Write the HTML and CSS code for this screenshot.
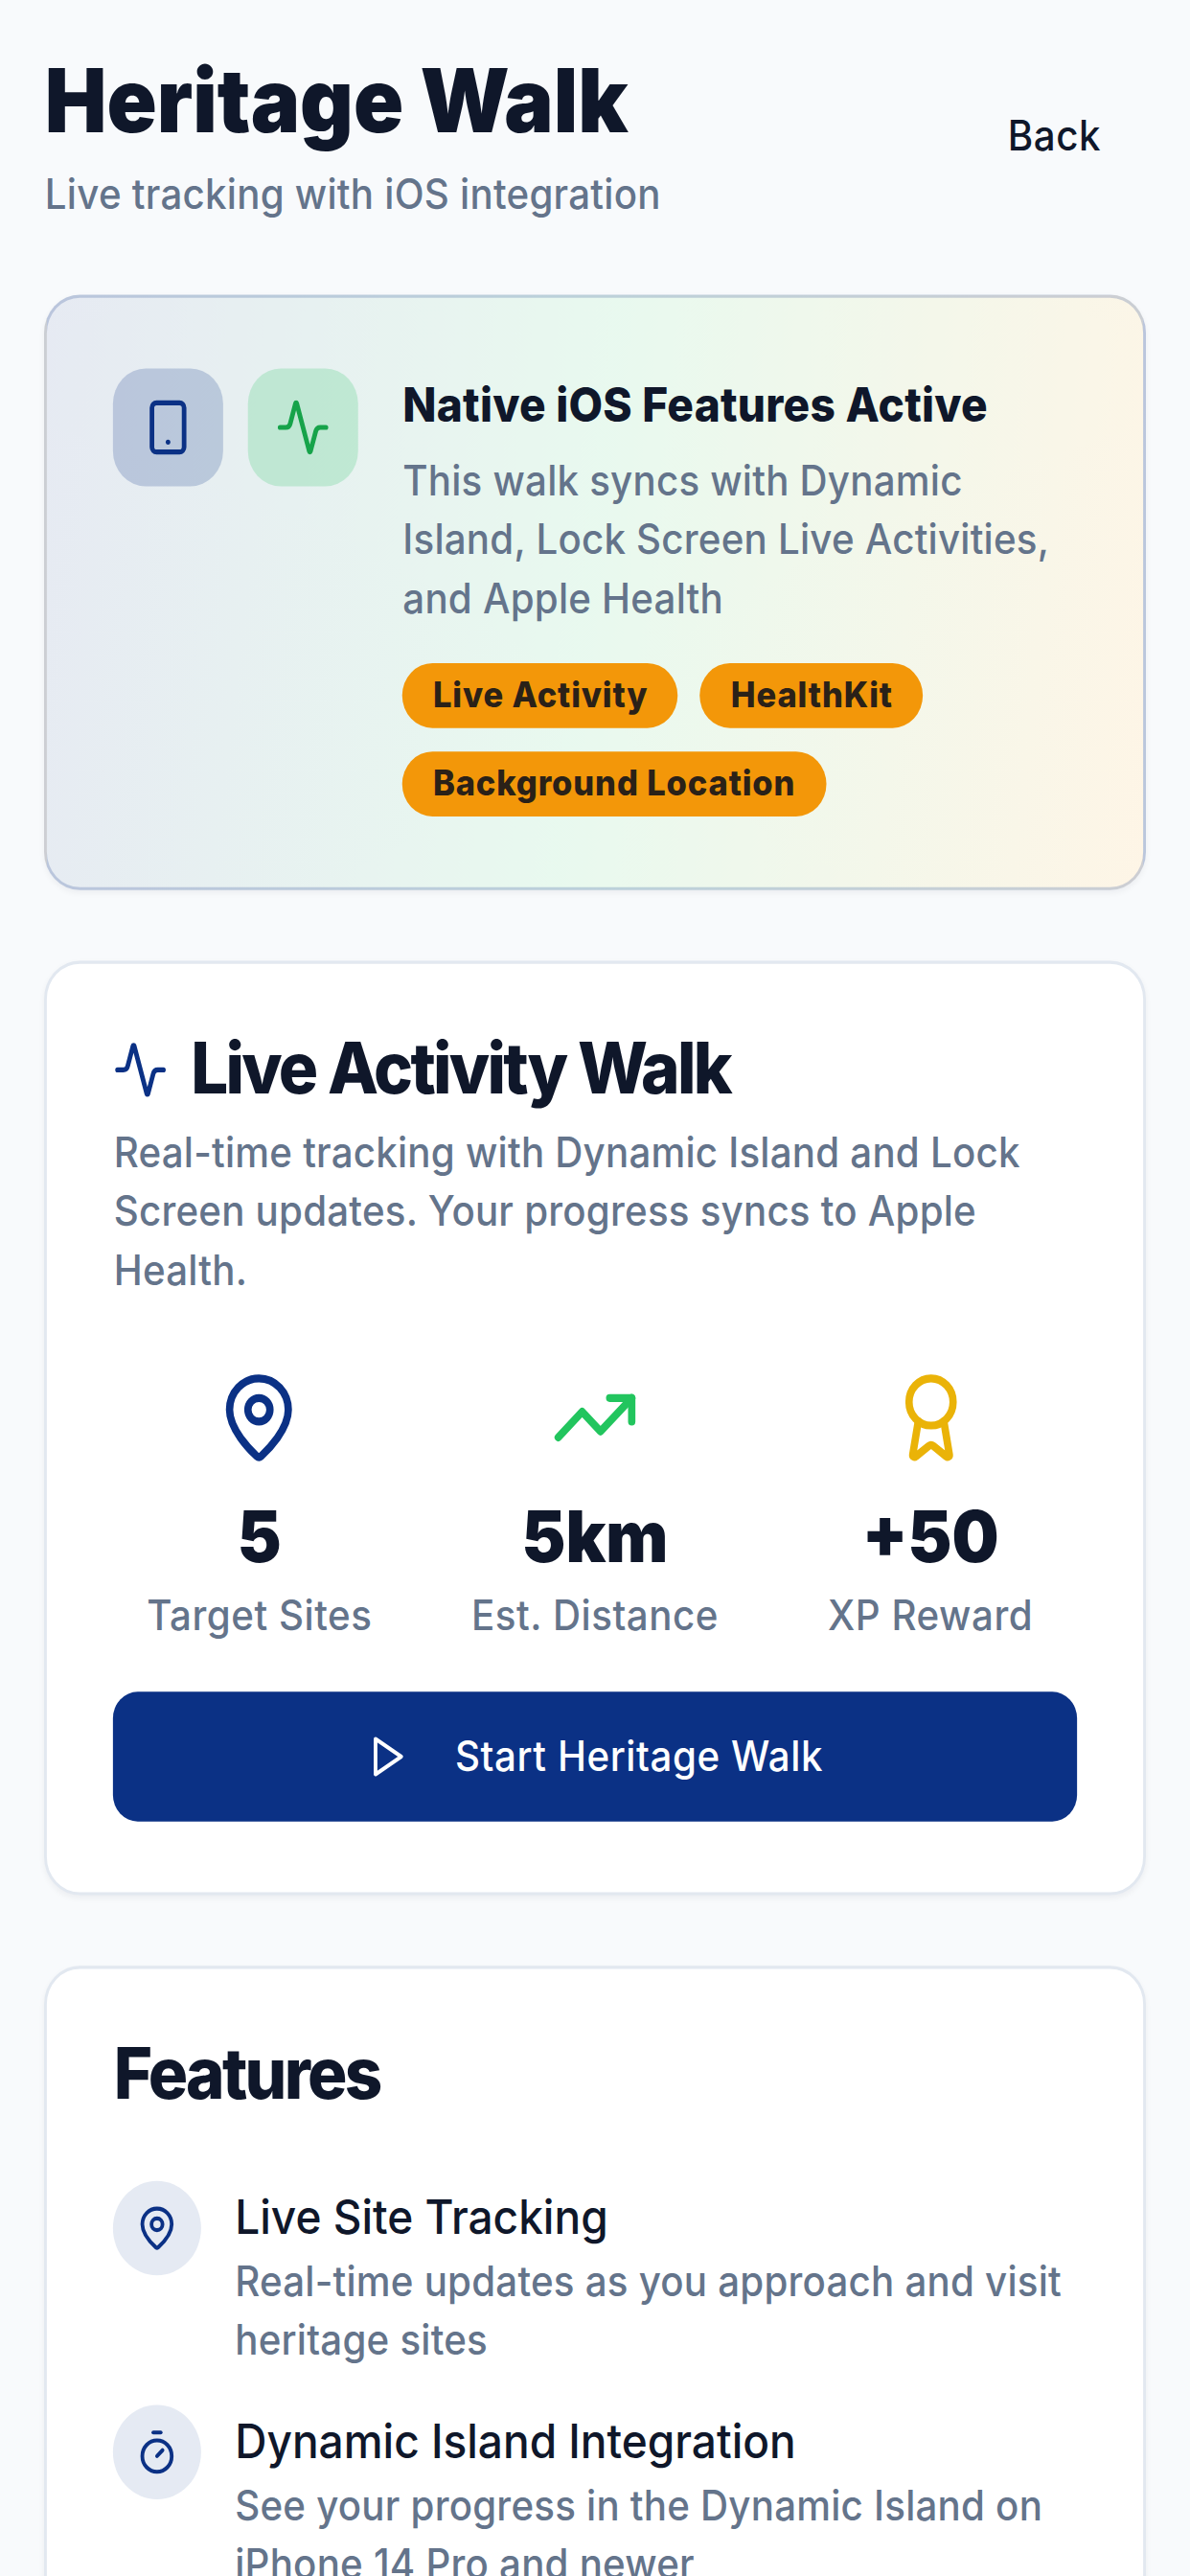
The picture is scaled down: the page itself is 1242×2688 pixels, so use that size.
FILE: index.html
```html
<!DOCTYPE html>
<html lang="en">
<head>
<meta charset="utf-8">
<title>Heritage Walk</title>
<link rel="stylesheet" href="styles.css">
</head>
<body>
<main class="page">
  <header class="header">
    <div>
      <h1 class="title">Heritage Walk</h1>
      <p class="subtitle">Live tracking with iOS integration</p>
    </div>
    <button class="back">Back</button>
  </header>

  <section class="card native">
    <div class="native-icons">
      <div class="native-icon native-icon-blue">
        <svg class="icon-20 stroke-blue" viewBox="0 0 24 24"><rect width="14" height="20" x="5" y="2" rx="2" ry="2"/><path d="M12 18h.01"/></svg>
      </div>
      <div class="native-icon native-icon-green">
        <svg class="icon-20 stroke-green-dark" viewBox="0 0 24 24"><path d="M22 12h-2.48a2 2 0 0 0-1.93 1.46l-2.35 8.36a.25.25 0 0 1-.48 0L9.24 2.18a.25.25 0 0 0-.48 0l-2.35 8.36A2 2 0 0 1 4.49 12H2"/></svg>
      </div>
    </div>
    <div class="native-body">
      <h3 class="native-title">Native iOS Features Active</h3>
      <p class="muted native-desc">This walk syncs with Dynamic Island, Lock Screen Live Activities, and Apple Health</p>
      <div class="tags">
        <span class="tag">Live Activity</span>
        <span class="tag">HealthKit</span>
        <span class="tag">Background Location</span>
      </div>
    </div>
  </section>

  <section class="card walk">
    <h2 class="card-title">
      <svg class="icon-20 stroke-blue" viewBox="0 0 24 24"><path d="M22 12h-2.48a2 2 0 0 0-1.93 1.46l-2.35 8.36a.25.25 0 0 1-.48 0L9.24 2.18a.25.25 0 0 0-.48 0l-2.35 8.36A2 2 0 0 1 4.49 12H2"/></svg>
      Live Activity Walk
    </h2>
    <p class="muted walk-desc">Real-time tracking with Dynamic Island and Lock Screen updates. Your progress syncs to Apple Health.</p>
    <div class="stats">
      <div class="stat">
        <svg class="icon-32 stroke-blue" viewBox="0 0 24 24"><path d="M20 10c0 4.993-5.539 10.193-7.399 11.799a1 1 0 0 1-1.202 0C9.539 20.193 4 14.993 4 10a8 8 0 0 1 16 0"/><circle cx="12" cy="10" r="3"/></svg>
        <div class="stat-value">5</div>
        <div class="stat-label">Target Sites</div>
      </div>
      <div class="stat">
        <svg class="icon-32 stroke-green" viewBox="0 0 24 24"><path d="M16 7h6v6"/><path d="m22 7-8.5 8.5-5-5L2 17"/></svg>
        <div class="stat-value">5km</div>
        <div class="stat-label">Est. Distance</div>
      </div>
      <div class="stat">
        <svg class="icon-32 stroke-yellow" viewBox="0 0 24 24"><path d="m15.477 12.89 1.515 8.526a.5.5 0 0 1-.81.47l-3.58-2.687a1 1 0 0 0-1.197 0l-3.586 2.686a.5.5 0 0 1-.81-.469l1.514-8.526"/><circle cx="12" cy="8" r="6"/></svg>
        <div class="stat-value">+50</div>
        <div class="stat-label">XP Reward</div>
      </div>
    </div>
    <button class="start">
      <svg class="icon-16 stroke-white" viewBox="0 0 24 24"><polygon points="5 3 19 12 5 21 5 3"/></svg>
      Start Heritage Walk
    </button>
  </section>

  <section class="card features">
    <h2 class="card-title features-title">Features</h2>
    <div class="feature-list">
      <div class="feature">
        <div class="feature-icon">
          <svg class="icon-16 stroke-blue" viewBox="0 0 24 24"><path d="M20 10c0 4.993-5.539 10.193-7.399 11.799a1 1 0 0 1-1.202 0C9.539 20.193 4 14.993 4 10a8 8 0 0 1 16 0"/><circle cx="12" cy="10" r="3"/></svg>
        </div>
        <div>
          <h3 class="feature-title">Live Site Tracking</h3>
          <p class="muted">Real-time updates as you approach and visit heritage sites</p>
        </div>
      </div>
      <div class="feature">
        <div class="feature-icon">
          <svg class="icon-16 stroke-blue" viewBox="0 0 24 24"><line x1="10" x2="14" y1="2" y2="2"/><line x1="12" x2="15" y1="14" y2="11"/><circle cx="12" cy="14" r="8"/></svg>
        </div>
        <div>
          <h3 class="feature-title">Dynamic Island Integration</h3>
          <p class="muted">See your progress in the Dynamic Island on iPhone 14 Pro and newer</p>
        </div>
      </div>
    </div>
  </section>
</main>
</body>
</html>
```
FILE: styles.css
```css
/* The reference is a 432x874 layout resized unevenly to 1242x2688. */
* { box-sizing: border-box; }
html, body { margin: 0; width: 1242px; height: 2688px; overflow: hidden; }
body { background: #f8fafc; color: #0f172a; font-family: Inter, "Liberation Sans", sans-serif; }
h1, h2, h3, p { margin: 0; }
svg { fill: none; stroke-linecap: round; stroke-linejoin: round; stroke-width: 2; flex-shrink: 0; }
.icon-16 { width: 16px; height: 16px; }
.icon-20 { width: 20px; height: 20px; }
.icon-32 { width: 32px; height: 32px; }
.stroke-blue { stroke: #0b3185; }
.stroke-green { stroke: #22c55e; }
.stroke-green-dark { stroke: #16a34a; }
.stroke-yellow { stroke: #eab308; }
.stroke-white { stroke: #fff; }

.page { width: 432px; height: 874px; overflow: hidden; padding: 16px 16.3px; display: flex; flex-direction: column; gap: 24px; transform: scale(2.875, 3.0755); transform-origin: 0 0; }
.header { display: flex; justify-content: space-between; align-items: center; flex-shrink: 0; }
.title { font-size: 30px; line-height: 36px; font-weight: 900; }
.subtitle { font-size: 14px; line-height: 20px; font-weight: 500; letter-spacing: .09px; color: #64748b; margin-top: 4px; }
.back { height: 40px; padding: 0 16px; border: 0; background: none; color: #0f172a; font: 500 14px/20px Inter, sans-serif; letter-spacing: .2px; }

.card { flex-shrink: 0; background: #fff; border: 1px solid #e2e8f0; border-radius: 13px; padding: 24px; box-shadow: 0 1px 2px rgba(15, 23, 42, .05); }
.muted { font-size: 14px; line-height: 20px; font-weight: 500; letter-spacing: .08px; color: #64748b; }
.stat-label { font-size: 14px; line-height: 20px; font-weight: 500; letter-spacing: .19px; color: #64748b; }

.native { display: flex; gap: 16.4px; border-color: rgba(11, 49, 133, .2); background: linear-gradient(97deg, rgba(11, 49, 133, .1), rgba(34, 197, 94, .1) 50%, rgba(245, 158, 11, .1)), #fff; }
.native-icons { display: flex; gap: 8.5px; flex-shrink: 0; }
.native-icon { width: 40px; height: 40px; border-radius: 12px; display: flex; align-items: center; justify-content: center; }
.native-icon-blue { background: rgba(11, 49, 133, .2); }
.native-icon-green { background: rgba(34, 197, 94, .2); }
.native-title { font-size: 16px; line-height: 24px; font-weight: 800; letter-spacing: .09px; }
.native-desc { margin-top: 4px; }
.tags { display: flex; flex-wrap: wrap; gap: 8px; margin-top: 12px; }
.tag { background: #f39709; color: #2a2118; font-size: 12px; line-height: 16px; font-weight: 800; letter-spacing: .3px; padding: 3px 11px; border-radius: 9999px; }

.card-title { display: flex; align-items: center; gap: 8px; font-size: 24px; line-height: 24px; font-weight: 800; letter-spacing: -.95px; }
.walk-desc { margin-top: 6px; }
.stats { display: grid; grid-template-columns: repeat(3, 1fr); gap: 16px; margin-top: 24px; }
.stat { display: flex; flex-direction: column; align-items: center; text-align: center; }
.stat-value { font-size: 24px; line-height: 32px; font-weight: 900; margin-top: 8.6px; }
.start { width: 100%; height: 44px; margin-top: 16.1px; border: 0; border-radius: 9px; background: #0b3185; color: #fff; font: 500 14px/20px Inter, sans-serif; letter-spacing: .2px; display: flex; align-items: center; justify-content: center; gap: 16px; }

.feature-list { display: flex; flex-direction: column; gap: 12px; margin-top: 24px; }
.feature { display: flex; gap: 12px; }
.feature-icon { width: 32px; height: 32px; border-radius: 50%; background: #e5eaf3; display: flex; align-items: center; justify-content: center; flex-shrink: 0; }
.feature-title { font-size: 16px; line-height: 24px; font-weight: 500; }
```
